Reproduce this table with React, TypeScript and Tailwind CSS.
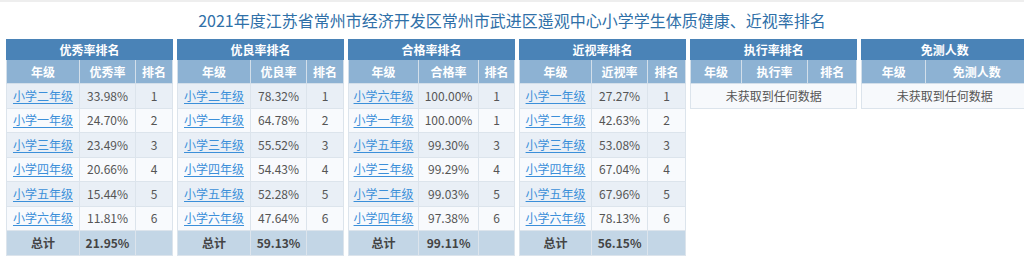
import React from 'react';

type Row = { grade: string; rate: string; rank: string };

type Board = {
  title: string;
  cols: string[];
  widths: string[];
  rows: Row[];
  total?: string;
};

const boards: Board[] = [
  {
    title: '优秀率排名',
    cols: ['年级', '优秀率', '排名'],
    widths: ['w-[73px]', 'w-[56px]', 'w-[37px]'],
    rows: [
      { grade: '小学二年级', rate: '33.98%', rank: '1' },
      { grade: '小学一年级', rate: '24.70%', rank: '2' },
      { grade: '小学三年级', rate: '23.49%', rank: '3' },
      { grade: '小学四年级', rate: '20.66%', rank: '4' },
      { grade: '小学五年级', rate: '15.44%', rank: '5' },
      { grade: '小学六年级', rate: '11.81%', rank: '6' },
    ],
    total: '21.95%',
  },
  {
    title: '优良率排名',
    cols: ['年级', '优良率', '排名'],
    widths: ['w-[73px]', 'w-[56px]', 'w-[37px]'],
    rows: [
      { grade: '小学二年级', rate: '78.32%', rank: '1' },
      { grade: '小学一年级', rate: '64.78%', rank: '2' },
      { grade: '小学三年级', rate: '55.52%', rank: '3' },
      { grade: '小学四年级', rate: '54.43%', rank: '4' },
      { grade: '小学五年级', rate: '52.28%', rank: '5' },
      { grade: '小学六年级', rate: '47.64%', rank: '6' },
    ],
    total: '59.13%',
  },
  {
    title: '合格率排名',
    cols: ['年级', '合格率', '排名'],
    widths: ['w-[70px]', 'w-[60px]', 'w-[36px]'],
    rows: [
      { grade: '小学六年级', rate: '100.00%', rank: '1' },
      { grade: '小学一年级', rate: '100.00%', rank: '1' },
      { grade: '小学五年级', rate: '99.30%', rank: '3' },
      { grade: '小学三年级', rate: '99.29%', rank: '4' },
      { grade: '小学二年级', rate: '99.03%', rank: '5' },
      { grade: '小学四年级', rate: '97.38%', rank: '6' },
    ],
    total: '99.11%',
  },
  {
    title: '近视率排名',
    cols: ['年级', '近视率', '排名'],
    widths: ['w-[72px]', 'w-[56px]', 'w-[38px]'],
    rows: [
      { grade: '小学一年级', rate: '27.27%', rank: '1' },
      { grade: '小学二年级', rate: '42.63%', rank: '2' },
      { grade: '小学三年级', rate: '53.08%', rank: '3' },
      { grade: '小学四年级', rate: '67.04%', rank: '4' },
      { grade: '小学五年级', rate: '67.96%', rank: '5' },
      { grade: '小学六年级', rate: '78.13%', rank: '6' },
    ],
    total: '56.15%',
  },
  {
    title: '执行率排名',
    cols: ['年级', '执行率', '排名'],
    widths: ['w-[51px]', 'w-[66px]', 'w-[49px]'],
    rows: [],
  },
  {
    title: '免测人数',
    cols: ['年级', '免测人数'],
    widths: ['w-[64px]', 'w-[102px]'],
    rows: [],
  },
];

const cell = 'border border-[#dce4ec] text-center';

const RankTable = ({ board }: { board: Board }) => (
  <table className="w-[166px] shrink-0 table-fixed border-collapse border border-[#d9dfe6] text-[12px] self-start">
    <colgroup>
      {board.widths.map((w, i) => (
        <col key={i} className={w} />
      ))}
    </colgroup>
    <thead>
      <tr className="h-[20px] bg-[#4a83b7] text-white font-bold">
        <th colSpan={board.cols.length} className="border border-[#4a83b7] font-bold">
          {board.title}
        </th>
      </tr>
      <tr className="h-[24px] bg-[#8db2d3] text-white">
        {board.cols.map((c) => (
          <th key={c} className="border border-[#d3dfea] font-bold">
            {c}
          </th>
        ))}
      </tr>
    </thead>
    <tbody className="text-[#555]">
      {board.rows.length === 0 && (
        <tr className="h-[25px] bg-[#f7f9fc]">
          <td colSpan={board.cols.length} className={cell}>
            未获取到任何数据
          </td>
        </tr>
      )}
      {board.rows.map((r, i) => (
        <tr key={i} className={i % 2 === 0 ? 'h-[24.5px] bg-[#e9eff6]' : 'h-[24.5px] bg-[#f8fafd]'}>
          <td className={cell}>
            <a href="#" className="text-[#3b8fd9] underline underline-offset-2">
              {r.grade}
            </a>
          </td>
          <td className={cell}>{r.rate}</td>
          <td className={cell}>{r.rank}</td>
        </tr>
      ))}
      {board.total && (
        <tr className="h-[25px] bg-[#c3d6e6] font-bold text-[#444]">
          <td className={cell}>总计</td>
          <td className={cell}>{board.total}</td>
          <td className={cell}></td>
        </tr>
      )}
    </tbody>
  </table>
);

export default function App() {
  return (
    <div
      className="w-[1024px] h-[262px] overflow-hidden bg-white"
      style={{ fontFamily: '"Noto Sans CJK SC", "Noto Sans", sans-serif' }}
    >
      <div className="h-[2px] bg-[#eeeeee]" />
      <h1 className="h-[37px] flex items-center justify-center text-[16px] text-[#2f70a8] leading-none pb-[1px]">
        2021年度江苏省常州市经济开发区常州市武进区遥观中心小学学生体质健康、近视率排名
      </h1>
      <div className="flex gap-[4px] pl-[6px]">
        {boards.map((b) => (
          <RankTable key={b.title} board={b} />
        ))}
      </div>
    </div>
  );
}
